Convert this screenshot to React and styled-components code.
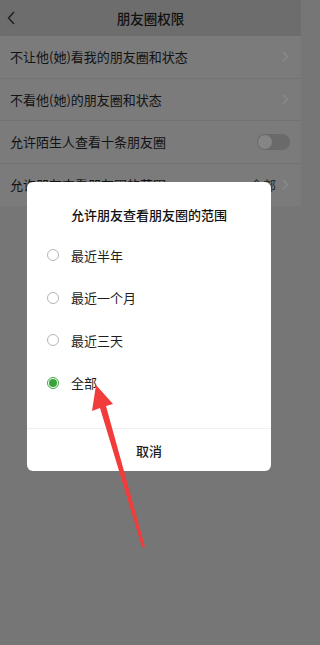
import React from 'react';
import styled, { createGlobalStyle } from 'styled-components';

const GlobalStyle = createGlobalStyle`
  html, body { margin: 0; padding: 0; }
  body {
    background: #767676;
    font-family: "Noto Sans CJK SC", "Noto Sans", sans-serif;
  }
`;

const Screen = styled.div`
  position: relative;
  width: 301px;
  height: 645px;
  overflow: hidden;
  background: #767676;
`;

const TopBar = styled.div`
  height: 36px;
  display: flex;
  align-items: center;
  justify-content: center;
  position: relative;
  background: #6d6d6d;
  color: #111;
  font-size: 13.5px;
  font-weight: 500;
`;

const BackIcon = styled.svg`
  position: absolute;
  left: 7px;
  top: 11px;
`;

const List = styled.div`
  background: #7b7b7b;
`;

const Row = styled.div`
  height: 42.5px;
  display: flex;
  align-items: center;
  padding: 0 12px 0 10px;
  font-size: 13px;
  color: #131313;
  border-bottom: ${p => (p.$last ? 'none' : '1px solid #737373')};
  box-sizing: border-box;
`;

const Label = styled.span`
  flex: 1;
`;

const Value = styled.span`
  color: #2a2a2a;
  margin-right: 6px;
`;

const Toggle = styled.div`
  width: 33px;
  height: 16px;
  border-radius: 8px;
  background: #6a6a6a;
  display: flex;
  align-items: center;
  padding: 1px;
  box-sizing: border-box;
  margin-right: -1px;
`;

const Knob = styled.div`
  width: 14px;
  height: 14px;
  border-radius: 50%;
  background: #858585;
`;

const Dialog = styled.div`
  position: absolute;
  left: 27px;
  top: 182px;
  width: 244px;
  height: 289px;
  background: #fff;
  border-radius: 6px;
  display: flex;
  flex-direction: column;
`;

const DialogTitle = styled.div`
  padding: 24px 0 10px;
  line-height: 18px;
  text-align: center;
  font-size: 13px;
  font-weight: 500;
  color: #111;
`;

const Options = styled.div`
  display: flex;
  flex-direction: column;
  margin-bottom: 24px;
`;

const Option = styled.div`
  height: 42.5px;
  display: flex;
  align-items: center;
  padding-left: 20px;
  gap: 12px;
  font-size: 13px;
  color: #1e1e1e;
`;

const Radio = styled.span`
  width: 12px;
  height: 12px;
  border-radius: 50%;
  box-sizing: border-box;
  border: 1px solid ${p => (p.$on ? '#3fa83f' : '#b5b5b5')};
  display: flex;
  align-items: center;
  justify-content: center;
  &::after {
    content: '';
    width: 8px;
    height: 8px;
    border-radius: 50%;
    background: ${p => (p.$on ? '#3aa23a' : 'transparent')};
  }
`;

const Footer = styled.div`
  flex: 1;
  border-top: 1px solid #f0f0f0;
  display: flex;
  align-items: center;
  justify-content: center;
  font-size: 13px;
  font-weight: 500;
  color: #1a1a1a;
`;

const Arrow = styled.svg`
  position: absolute;
  left: 0;
  top: 0;
  pointer-events: none;
`;

const Chevron = () => (
  <svg width="7" height="11" viewBox="0 0 7 11">
    <path d="M1 1l4.5 4.5L1 10" fill="none" stroke="#8c8c8c" strokeWidth="1.2" />
  </svg>
);

const rows = [
  { label: '不让他(她)看我的朋友圈和状态', kind: 'chev' },
  { label: '不看他(她)的朋友圈和状态', kind: 'chev' },
  { label: '允许陌生人查看十条朋友圈', kind: 'toggle' },
  { label: '允许朋友查看朋友圈的范围', kind: 'value', value: '全部' },
];

const options = ['最近半年', '最近一个月', '最近三天', '全部'];

export default function App() {
  return (
    <Screen>
      <GlobalStyle />
      <TopBar>
        <BackIcon width="9" height="14" viewBox="0 0 9 14">
          <path d="M7 1L1.5 7 7 13" fill="none" stroke="#1e1e1e" strokeWidth="1.4" />
        </BackIcon>
        朋友圈权限
      </TopBar>
      <List>
        {rows.map((r, i) => (
          <Row key={r.label} $last={i === rows.length - 1}>
            <Label>{r.label}</Label>
            {r.kind === 'toggle' ? (
              <Toggle><Knob /></Toggle>
            ) : (
              <>
                {r.value && <Value>{r.value}</Value>}
                <Chevron />
              </>
            )}
          </Row>
        ))}
      </List>

      <Dialog>
        <DialogTitle>允许朋友查看朋友圈的范围</DialogTitle>
        <Options>
          {options.map((o, i) => (
            <Option key={o}>
              <Radio $on={i === options.length - 1} />
              {o}
            </Option>
          ))}
        </Options>
        <Footer>取消</Footer>
      </Dialog>

      <Arrow width="301" height="645" viewBox="0 0 301 645">
        <polygon
          points="96,385 113,404 106,406 145,547 142,547 100,408 92,411"
          fill="#f23c3c"
        />
      </Arrow>
    </Screen>
  );
}
